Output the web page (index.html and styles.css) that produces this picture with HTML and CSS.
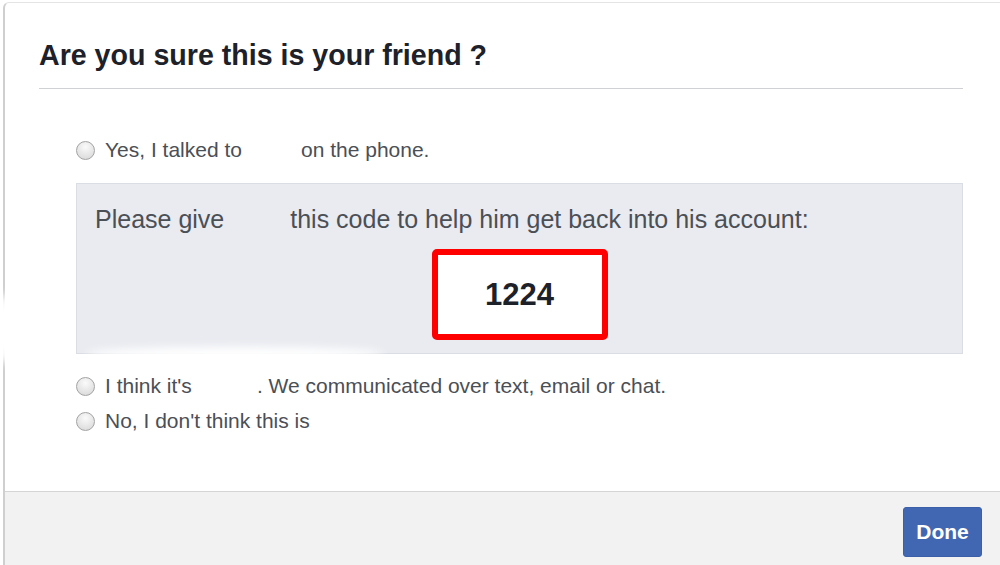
FILE: index.html
```html
<!DOCTYPE html>
<html lang="en">
<head>
  <meta charset="UTF-8">
  <title>Are you sure this is your friend?</title>
  <link rel="stylesheet" href="styles.css">
</head>
<body>

  <div class="dialog">
    <div class="dialog-header">
      <h2>Are you sure this is your friend ?</h2>
    </div>

    <div class="dialog-body">
      <label class="option">
        <span class="radio"></span>
        <span>Yes, I talked to<span class="blank blank-a"></span>on the phone.</span>
      </label>

      <div class="code-panel">
        <p>Please give<span class="blank blank-b"></span>this code to help him get back into his account:</p>
        <div class="code-box">1224</div>
      </div>

      <label class="option option-second">
        <span class="radio"></span>
        <span>I think it's<span class="blank blank-c"></span>. We communicated over text, email or chat.</span>
      </label>

      <label class="option option-third">
        <span class="radio"></span>
        <span>No, I don't think this is</span>
      </label>
    </div>

    <div class="dialog-footer">
      <button>Done</button>
    </div>

    <!-- scribbled-out names in the original capture -->
    <div class="smear smear-left"></div>
    <div class="smear smear-bottom"></div>
  </div>

</body>
</html>
```

FILE: styles.css
```css
* {
  box-sizing: border-box;
}

body {
  margin: 0;
  padding: 0;
  background: #ffffff;
  font-family: 'Liberation Sans', Arial, sans-serif;
  overflow: hidden;
}

.dialog {
  position: relative;
  margin: 2px 0 0 3px;
  width: 1000px;
  height: 563px;
  display: flex;
  flex-direction: column;
  border-left: 2px solid #cfcfcf;
  border-top: 1px solid #e4e4e4;
  border-top-left-radius: 6px;
  background: #ffffff;
}

.dialog-header {
  margin: 0 40px 0 34px;
  padding: 36px 0 17px;
  border-bottom: 1px solid #cfd1d5;
}

h2 {
  margin: 0;
  font-size: 28.6px;
  line-height: 32px;
  font-weight: bold;
  color: #1d2129;
}

.dialog-body {
  flex: 1;
  margin: 0 40px 0 71px;
  padding-top: 49px;
}

.option {
  display: flex;
  align-items: center;
  font-size: 21px;
  line-height: 24px;
  color: #4b4f56;
}

.option-second {
  margin-top: 20px;
}

.option-third {
  margin-top: 11px;
}

.radio {
  width: 19px;
  height: 19px;
  margin-right: 10px;
  border-radius: 50%;
  border: 1px solid #a3a3a3;
  background: radial-gradient(circle at 50% 30%, #fafafa, #d6d6d6);
  flex-shrink: 0;
}

.blank {
  display: inline-block;
}

.blank-a {
  width: 59px;
}

.blank-b {
  width: 66px;
}

.blank-c {
  width: 65px;
}

.code-panel {
  margin-top: 21px;
  padding: 20px 18px 13px;
  background: #e9ebf0;
  border: 1px solid #dadde3;
}

.code-panel p {
  margin: 0;
  font-size: 25px;
  line-height: 30px;
  color: #4b4f56;
}

.code-box {
  width: 176px;
  height: 91px;
  margin: 15px auto 0;
  border: 6px solid #ff0000;
  border-radius: 5px;
  background: #ffffff;
  display: flex;
  justify-content: center;
  align-items: center;
  font-size: 31px;
  font-weight: bold;
  color: #1d2129;
}

.dialog-footer {
  height: 74px;
  padding: 15px 21px 0 0;
  display: flex;
  justify-content: flex-end;
  align-items: flex-start;
  background: #f2f2f2;
  border-top: 1px solid #d5d5d5;
}

button {
  width: 79px;
  height: 50px;
  padding: 0;
  background-color: #4267b2;
  border: 1px solid #3b5fa8;
  border-radius: 3px;
  color: #ffffff;
  font-family: 'Liberation Sans', Arial, sans-serif;
  font-size: 21px;
  font-weight: bold;
  cursor: pointer;
}

.smear {
  position: absolute;
  background: #ffffff;
  filter: blur(4px);
  border-radius: 50%;
}

.smear-left {
  left: -12px;
  top: 290px;
  width: 34px;
  height: 72px;
}

.smear-bottom {
  left: 80px;
  top: 344px;
  width: 300px;
  height: 14px;
}
```
